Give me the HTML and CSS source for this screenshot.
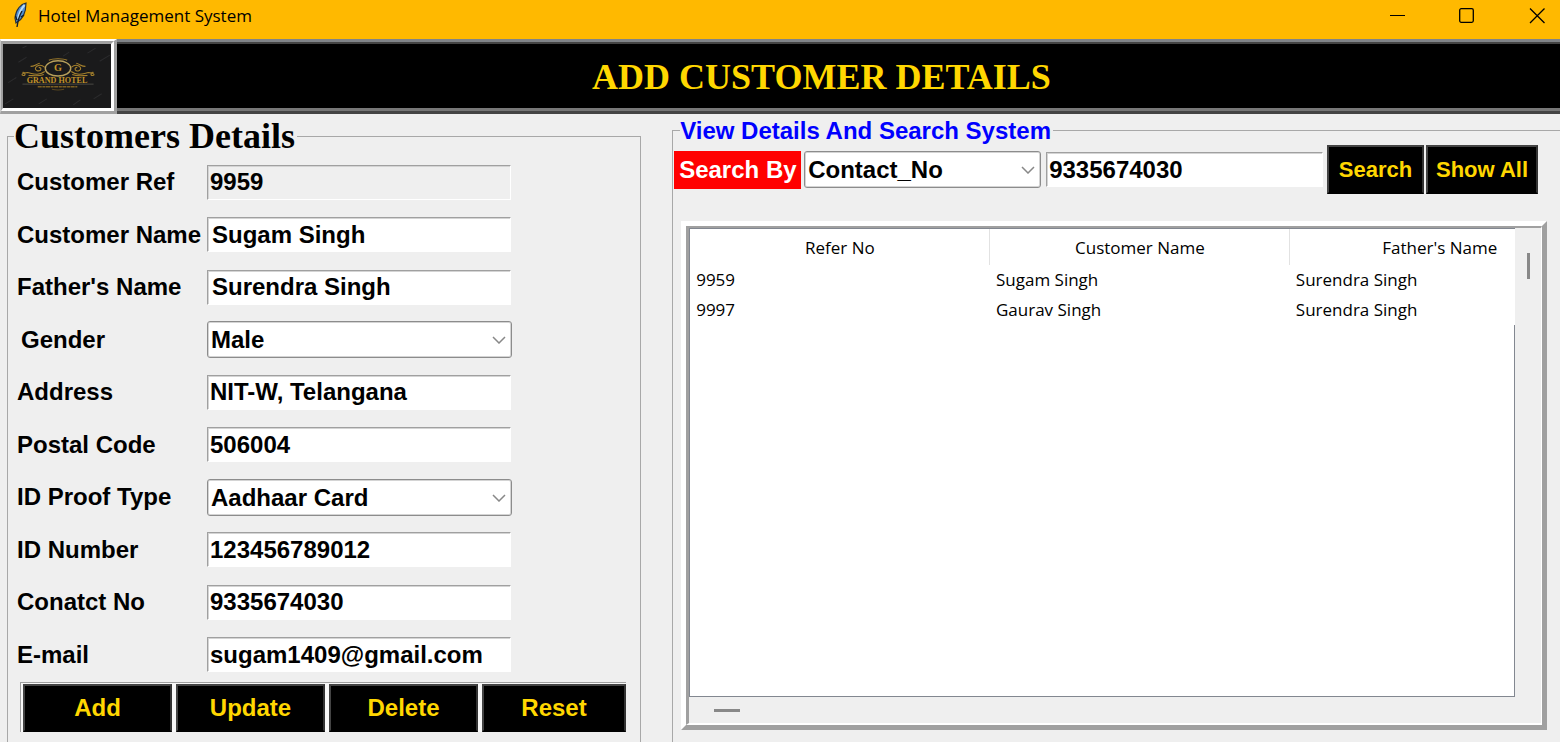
FILE: index.html
```html
<!DOCTYPE html>
<html lang="en">
<head>
<meta charset="utf-8">
<title>Hotel Management System</title>
<link rel="stylesheet" href="styles.css">
</head>
<body>
<div class="window">
  <div class="titlebar">
    <svg class="feather" width="16" height="26" viewBox="0 0 16 26" aria-hidden="true">
      <path d="M14 1C9 2 4 7 3 16l1 5c6-3 10-10 10-20z" fill="#4f8fd6" stroke="#27323d" stroke-width="1.200"/>
      <path d="M12.500 3C9 7 7 12 6 17" fill="none" stroke="#b9dcf8" stroke-width="2"/>
      <path d="M10 9C7 14 6 18 5 25M3.500 14l1.500 4M12 13l-3 2" fill="none" stroke="#16202a" stroke-width="1.400"/>
    </svg>
    <span class="caption">Hotel Management System</span>
    <div class="controls">
      <button type="button" aria-label="Minimize"><svg width="16" height="16" viewBox="0 0 16 16"><path d="M1 7.500h15" stroke="#000" fill="none"/></svg></button>
      <button type="button" aria-label="Maximize"><svg width="16" height="16" viewBox="0 0 16 16"><rect x=".7" y=".7" width="13.600" height="13.600" rx="1.500" stroke="#000" stroke-width="1.300" fill="none"/></svg></button>
      <button type="button" aria-label="Close"><svg width="16" height="16" viewBox="0 0 16 16"><path d="M1 .5l14.500 14.500M15.500 .5L1 15" stroke="#000" stroke-width="1.300" fill="none"/></svg></button>
    </div>
  </div>

  <header class="header">
    <div class="logo">
      <svg viewBox="0 0 108 63" preserveAspectRatio="xMidYMid slice" role="img" aria-label="Grand Hotel">
        <rect width="108" height="63" fill="#1a1a1b"/>
        <g stroke="#2b2b2d" stroke-width="1">
          <path d="M16 18l8-5M84 9l8-5M96 17l10-6M6 38l8-5M36 59l8-5M60 12l6-4M90 54l8-5M3 59l8-5M20 4l4-2M70 60l7-5"/>
        </g>
        <g fill="none" stroke="#a5802c" stroke-width="1.100">
          <ellipse cx="55" cy="24" rx="12.500" ry="7.500" stroke="#b8a05c" stroke-width="1.400"/>
          <path d="M42 23c-6-5-12 1-8 3s6-3 2-3M42 27c-7 5-12 2-17 1-5 0-7 3-4 3s1-4-1-3M41 30c-5 2-10 1-15 1M37 19c-4 1-5 3-9 3"/>
          <path d="M68 23c6-5 12 1 8 3s-6-3-2-3M68 27c7 5 12 2 17 1 5 0 7 3 4 3s-1-4 1-3M69 30c5 2 10 1 15 1M73 19c4 1 5 3 9 3"/>
          <path d="M46 16c4-2 14-2 18 0"/>
          <path d="M49 44.500c4 1 8 1 12 0" stroke="#5a4720"/>
        </g>
        <path d="M20 39.500h70" stroke="#55544e" stroke-width=".8"/>
        <text class="logo-initial" x="55" y="27">G</text>
        <text class="logo-name" x="54" y="38">GRAND HOTEL</text>
        <path d="M35 42h39" stroke="#7c5f22" stroke-width="1.400" stroke-dasharray="4 .6 3 .5"/>
      </svg>
    </div>
    <div class="banner"><h1>ADD CUSTOMER DETAILS</h1></div>
  </header>

  <main class="main">
    <fieldset class="panel customer">
      <legend>Customers Details</legend>
      <form class="fields">
        <label for="ref">Customer Ref</label><input id="ref" class="entry" value="9959" readonly>
        <label for="name">Customer Name</label><input id="name" class="entry inset" value="Sugam Singh">
        <label for="father">Father's Name</label><input id="father" class="entry inset" value="Surendra Singh">
        <label for="gender" class="nudged">Gender</label>
        <div class="combo"><select id="gender"><option>Male</option></select><svg viewBox="0 0 14 8"><path d="M1 1l6 6 6-6"/></svg></div>
        <label for="address">Address</label><input id="address" class="entry" value="NIT-W, Telangana">
        <label for="postal">Postal Code</label><input id="postal" class="entry" value="506004">
        <label for="idtype">ID Proof Type</label>
        <div class="combo"><select id="idtype"><option>Aadhaar Card</option></select><svg viewBox="0 0 14 8"><path d="M1 1l6 6 6-6"/></svg></div>
        <label for="idnum">ID Number</label><input id="idnum" class="entry" value="123456789012">
        <label for="contact">Conatct No</label><input id="contact" class="entry" value="9335674030">
        <label for="email">E-mail</label><input id="email" class="entry" value="sugam1409@gmail.com">
      </form>
      <div class="actions">
        <button type="button">Add</button>
        <button type="button">Update</button>
        <button type="button">Delete</button>
        <button type="button">Reset</button>
      </div>
    </fieldset>

    <fieldset class="panel search">
      <legend>View Details And Search System</legend>
      <form class="searchbar">
        <label for="field">Search By</label>
        <div class="combo"><select id="field"><option>Contact_No</option></select><svg viewBox="0 0 14 8"><path d="M1 1l6 6 6-6"/></svg></div>
        <input class="entry" aria-label="Search text" value="9335674030">
        <button type="button">Search</button>
        <button type="button" class="wide">Show All</button>
      </form>
      <div class="frame">
        <div class="well">
          <div class="tree">
            <table>
              <thead><tr><th>Refer No</th><th>Customer Name</th><th>Father's Name</th></tr></thead>
              <tbody>
                <tr><td>9959</td><td>Sugam Singh</td><td>Surendra Singh</td></tr>
                <tr><td>9997</td><td>Gaurav Singh</td><td>Surendra Singh</td></tr>
              </tbody>
            </table>
            <div class="blank"></div>
          </div>
          <div class="vscroll"><div class="thumb"></div></div>
          <div class="hscroll"><div class="thumb"></div></div>
        </div>
      </div>
    </fieldset>
  </main>
</div>
</body>
</html>
```
FILE: styles.css
```css
* { box-sizing: border-box; }

body {
  margin: 0;
  background: #efefef;
  color: #000;
  font-family: "Liberation Sans", Arial, sans-serif;
}

.window {
  height: 100vh;
  display: flex;
  flex-direction: column;
  overflow: hidden;
}

button, input, select {
  margin: 0;
  font: inherit;
  color: inherit;
}

/* Title bar */
.titlebar {
  flex: none;
  height: 39px;
  display: flex;
  align-items: flex-start;
  padding-left: 12px;
  background: #ffb900;
}

.feather { margin-top: 2px; }

.caption {
  margin-left: 10px;
  font: 17px/32px "Open Sans", "Noto Sans", sans-serif;
}

.controls {
  display: flex;
  gap: 24px;
  margin-left: auto;
}

.controls button {
  width: 46px;
  height: 32px;
  display: grid;
  place-items: center;
  padding: 0;
  border: 0;
  background: none;
}

/* Header */
.header {
  flex: none;
  height: 75px;
  display: flex;
}

.logo {
  flex: none;
  width: 117px;
  border: 3px solid;
  border-width: 2px 3px 3px 1px;
  border-color: #fff #a0a0a0 #a0a0a0 #c8c8c8;
}

.logo svg {
  display: block;
  width: 100%;
  height: 100%;
  border: 3px solid;
  border-width: 3px 3px 3px 2px;
  border-color: #a0a0a0 #fff #fff #a0a0a0;
}

.logo-initial, .logo-name {
  fill: #c2932a;
  font-family: "Liberation Serif", serif;
  font-weight: bold;
  text-anchor: middle;
}

.logo-initial { font-size: 10px; }
.logo-name { font-size: 8px; }

.banner {
  flex: 1;
  border: solid #808488;
  border-width: 3px 0;
  border-bottom-color: #444;
  background: #000;
}

.banner h1 {
  height: 100%;
  margin: 0;
  padding-right: 34px;
  border: solid #444;
  border-width: 2px 0 3px;
  border-bottom-color: #777;
  color: #ffd700;
  font: bold 36px/66px "Liberation Serif", "Times New Roman", serif;
  text-align: center;
}

/* Panels */
.main {
  flex: 1;
  min-height: 0;
  display: grid;
  grid-template-columns: 5fr 7fr;
  gap: 31px;
  padding: 2px 0 0 7px;
}

.panel {
  min-width: 0;
  margin: 0;
  padding: 0;
  border: 1px solid #a8a8a8;
  border-bottom: 0;
}

.customer { padding-left: 9px; }

.customer legend {
  margin-left: -3px;
  padding: 0 2px 0 0;
  font: bold 36px/40px "Liberation Serif", "Times New Roman", serif;
}

.search {
  border-right: 0;
  padding-left: 1px;
}

.search legend {
  margin-left: 6px;
  padding: 0 2px 0 0;
  color: #00f;
  font: bold 24px/29px "Liberation Sans", Arial, sans-serif;
}

/* Customer form */
.fields {
  display: grid;
  grid-template-columns: 190px 305px;
  grid-auto-rows: 1fr;
  height: 525px;
  align-items: center;
  font-weight: bold;
  font-size: 24px;
}

.nudged { padding-left: 4px; }

.entry {
  width: 304px;
  height: 35px;
  padding: 0 2px;
  border: 1px solid;
  border-color: #a0a0a0 #fff #fff #a0a0a0;
  border-radius: 0;
  outline: 0;
  background: #fff;
  box-shadow: inset 1px 1px #d4d4d4;
}

.entry:read-only {
  background: #efefef;
}

.entry.inset { padding-left: 4px; }

.combo {
  position: relative;
  height: 37px;
}

.combo select {
  appearance: none;
  width: 100%;
  height: 100%;
  padding: 0 30px 0 3px;
  border: 1px solid #8c8c8c;
  border-radius: 3px;
  background: #fff;
  box-shadow: inset 0 0 0 1px #d4d4d4;
}

.combo svg {
  position: absolute;
  top: 15px;
  right: 6px;
  width: 14px;
  height: 8px;
  fill: none;
  stroke: #888;
  stroke-width: 1.5;
  pointer-events: none;
}

.actions {
  width: 606px;
  height: 50px;
  display: flex;
  gap: 4px;
  margin: 1px 0 0 3px;
  padding: 1px 0 0 2px;
  border-top: 1px solid #a0a0a0;
  border-left: 1px solid #a0a0a0;
  background: #f8f8f8;
}

.actions button, .searchbar button {
  flex: 0 0 149px;
  padding: 0;
  border: 2px solid;
  border-color: #444 #333 #000 #444;
  background: #000;
  color: #ffd700;
  font-weight: bold;
  font-size: 24px;
}

.actions button:last-child { flex: 1; }

/* Search bar */
.searchbar {
  height: 49px;
  display: flex;
  align-items: center;
  padding-right: 22px;
  font-weight: bold;
  font-size: 24px;
}

.searchbar label {
  flex: none;
  width: 127px;
  padding-left: 5px;
  background: #f00;
  color: #fff;
  line-height: 38px;
}

.searchbar .combo {
  flex: none;
  width: 237px;
  margin: 0 5px 0 3px;
}

.searchbar .entry {
  flex: 1;
  min-width: 0;
}

.searchbar button {
  flex: 0 0 97px;
  height: 49px;
  margin-left: 4px;
  font-size: 22px;
}

.searchbar button.wide {
  flex-basis: 112px;
  margin-left: 2px;
}

/* Results */
.frame {
  height: 509px;
  margin: 27px 13px 0 7px;
  border: 5px solid;
  border-color: #fff #a0a0a0 #a0a0a0 #fff;
}

.well {
  height: 100%;
  display: grid;
  grid-template: 1fr 26px / 1fr 26px;
  border: 3px solid;
  border-width: 2px 1px 2px 3px;
  border-color: #a0a0a0 #fff #fff #a0a0a0;
}

.tree {
  min-width: 0;
  display: flex;
  flex-direction: column;
  overflow: hidden;
  border: solid #828790;
  border-width: 1px 0 1px 1px;
  background: #fff;
  font: 17px "Open Sans", "Noto Sans", sans-serif;
}

.tree table {
  width: 900px;
  table-layout: fixed;
  border-collapse: collapse;
}

.tree th {
  height: 36px;
  padding: 0;
  border-right: 1px solid #e2e2e2;
  font-weight: normal;
}

.tree td {
  height: 30px;
  padding: 0 6px;
  line-height: 24px;
}

.blank {
  flex: 1;
  border-right: 1px solid #828790;
}

.vscroll {
  padding: 25px 0 0 12px;
}

.vscroll .thumb {
  width: 3px;
  height: 26px;
  background: #888;
}

.hscroll {
  grid-column: 1 / 3;
  padding: 12px 0 0 25px;
}

.hscroll .thumb {
  width: 26px;
  height: 3px;
  background: #888;
}
```
